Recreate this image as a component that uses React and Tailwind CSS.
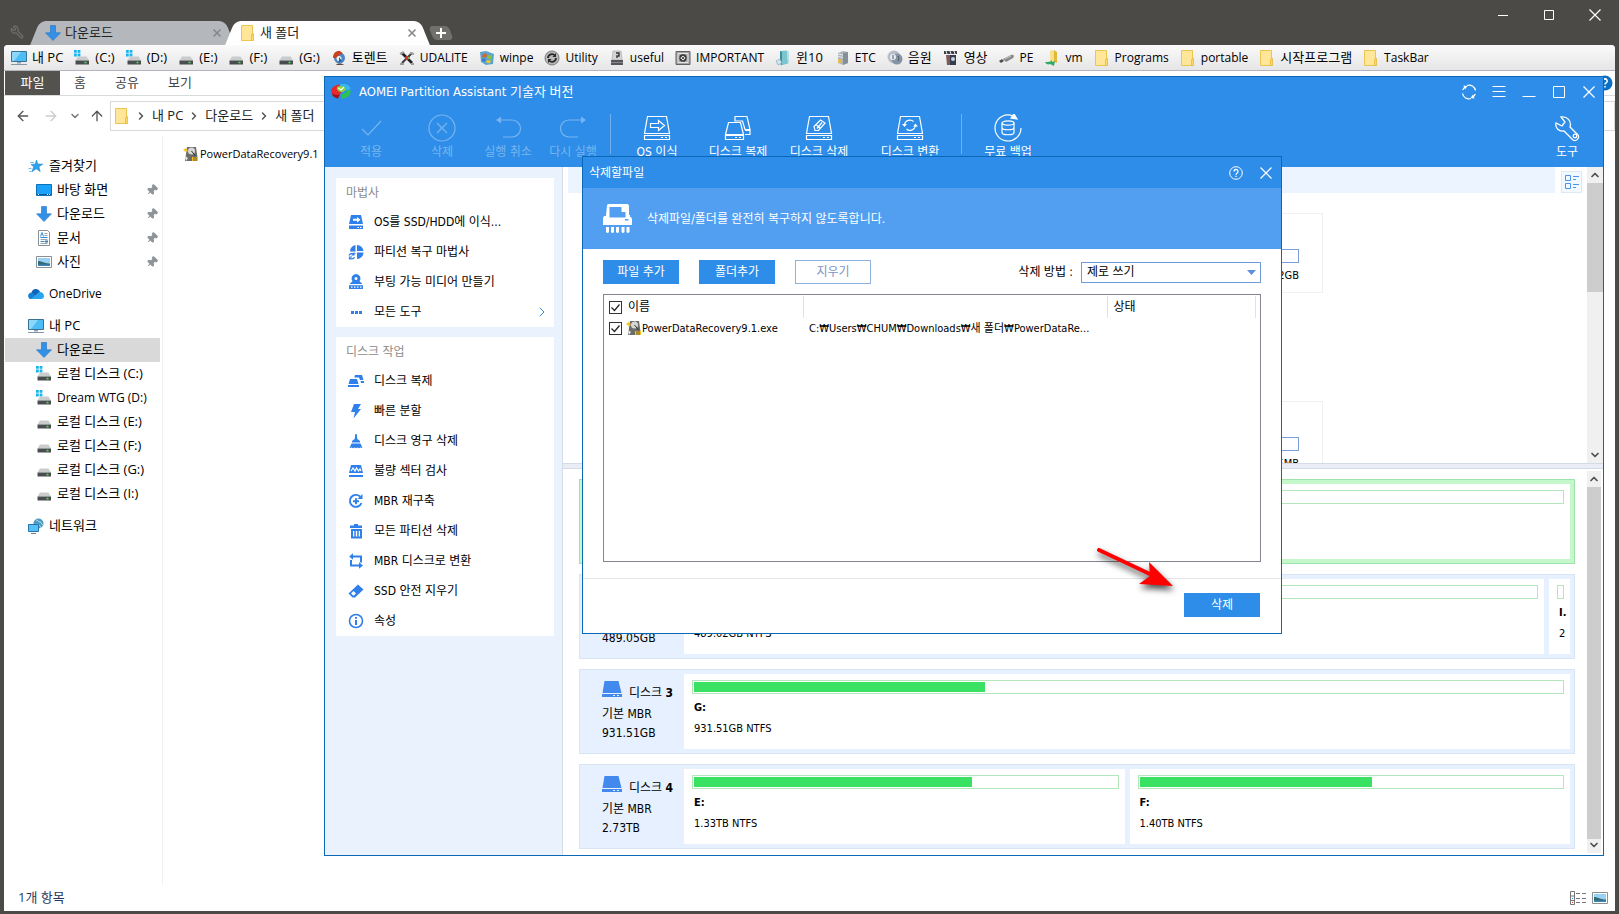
import React, { useState } from 'react';
import { Pin, Wrench, ArrowLeft, ArrowRight, ArrowUp, ChevronDown, ChevronRight, ChevronUp } from 'lucide-react';

/* ---------- Explorer icons ---------- */

const DownIcon = () => (
  <svg className="size-4 shrink-0" viewBox="0 0 16 16">
    <path d="M5.500.5h5v7.300h5L8 15.500.5 7.800h5z" fill="#3390e6" stroke="#1f74c4" strokeWidth=".6" />
  </svg>
);

const FolderIcon = () => (
  <svg className="size-4 shrink-0" viewBox="0 0 16 16">
    <path d="M1.500.5h11v15h-11z" fill="#ffe698" stroke="#eac54f" />
    <path d="M11.500 9.500l2-1v7h-2z" fill="#ffd968" stroke="#e3b93d" strokeWidth=".8" />
  </svg>
);

const PcIcon = () => (
  <svg className="size-4 shrink-0" viewBox="0 0 16 16">
    <path d="M.5 1.500h15v10H.5z" fill="#4fbdf5" stroke="#3a7296" />
    <path d="M1 2h9L3 11H1z" fill="#8bd8fb" />
    <path d="M6 12h4v1.500H6z" fill="#8fa3b3" />
    <path d="M0 14.500h16" stroke="#8496a6" />
  </svg>
);

const DriveIcon = ({ system }) => (
  <svg className="size-4 shrink-0" viewBox="0 0 16 16">
    {system && <path d="M0 0h2.800v2.800H0zM3.600 0h2.800v2.800H3.600zM0 3.600h2.800v2.800H0zM3.600 3.600h2.800v2.800H3.600z" fill="#18b4f1" />}
    <path d="M4 6.500h8.500l2.500 4H1.500z" fill="#c9cbcd" />
    <path d="M1.500 10.500H15v4H1.500z" fill="#4a4d50" />
    <path d="M10.500 11.800h2v1.500h-2z" fill="#4be34f" />
  </svg>
);

const StarIcon = () => (
  <svg className="size-4 shrink-0" viewBox="0 0 16 16">
    <path d="M8.500 2l1.200 4 5 .2-3.800 2.500 1.300 4.800-4-2.700-4.300 3 1.800-5-2.700-2.400 4.200-.2z" fill="#2ba3ec" stroke="#1783c9" strokeWidth=".6" />
    <path d="M2 4.500h4M.5 10.500h3M1.500 13.500h2" stroke="#69c2f5" />
  </svg>
);

const DesktopIcon = () => (
  <svg className="size-4 shrink-0" viewBox="0 0 16 16">
    <path d="M.5 2.500h15v11H.5z" fill="#1ba1f9" stroke="#0c73bb" />
    <path d="M1 12.500h14" stroke="#0a5b98" />
    <path d="M2 12.500h1M11 12.500h1M13 12.500h1" stroke="#fff" />
  </svg>
);

const DocIcon = () => (
  <svg className="size-4 shrink-0" viewBox="0 0 16 16">
    <path d="M2.500.5h9l2 2v13h-11z" fill="#fff" stroke="#8a8f94" />
    <path d="M8.500 3.500h3M8.500 5.500h3M4.500 9.500h7M4.500 13.500h7" stroke="#9aa4ad" />
    <path d="M4.500 6.500l1.500-4 1.500 4M4.500 7.500h7M4.500 11.500h4" stroke="#2c8ad6" fill="none" />
    <path d="M9 10.500h3v2H9z" fill="#53799a" />
  </svg>
);

const PictureIcon = () => (
  <svg className="size-4 shrink-0" viewBox="0 0 16 16">
    <path d="M.5 2.500h15v11H.5z" fill="#fff" stroke="#8a8f94" />
    <path d="M2 4h12v8H2z" fill="#9bd0f5" />
    <path d="M2 7c4 0 6 2.500 12 2.500V12H2z" fill="#2f6d73" />
    <path d="M2 10.500h12V12H2z" fill="#3f84b8" />
  </svg>
);

const CloudIcon = () => (
  <svg className="size-4 shrink-0" viewBox="0 0 16 16">
    <path d="M3.500 7a4.500 4.500 0 0 1 8.500-1.500L8 11z" fill="#0f64ba" />
    <path d="M.2 10.500A3.500 3.500 0 0 1 4 6.500l7 6.500H3A2.800 2.800 0 0 1 .2 10.500z" fill="#1680d5" />
    <path d="M3 13l7.500-6.500C13 5 16 7.500 16 10.200A2.800 2.800 0 0 1 13.500 13z" fill="#29a5ef" />
  </svg>
);

const NetworkIcon = () => (
  <svg className="size-4 shrink-0" viewBox="0 0 16 16">
    <circle cx="10.500" cy="5.500" r="5" fill="#4b9cc0" />
    <path d="M8 2c2 0 2 2 4 2s1 3 3 3M9 6c2 1 3 1 4 4" stroke="#b9dcea" fill="none" />
    <path d="M.5 6.500h10v7H.5z" fill="#56c0f7" stroke="#2775a8" />
    <path d="M3 15.500h5" stroke="#6d8598" />
  </svg>
);

const SetupIcon = () => (
  <svg className="size-4 shrink-0" viewBox="0 0 16 16">
    <path d="M4 1h9l2 14H2z" fill="#6c6d6b" />
    <circle cx="8.500" cy="5" r="3.500" fill="#d7d8d3" />
    <path d="M8.500 5l4 5" stroke="#333" />
    <path d="M0 4l3-2 2 3-2 1zM9 11h6v4H9z" fill="#f4c320" />
    <path d="M11 11v4M13 11v4" stroke="#3a3a34" strokeWidth=".8" />
    <path d="M2 10l3 2-2 3z" fill="#e7e7e0" />
  </svg>
);

/* ---------- Bookmark icons ---------- */

const TorrentIcon = () => (
  <svg className="size-4 shrink-0" viewBox="0 0 16 16">
    <circle cx="8.500" cy="8" r="5.500" fill="#4c86c6" />
    <path d="M2 8C2 3 5 .5 9 1l3 2.500L8 5 6 8z" fill="#c9401f" />
    <circle cx="8" cy="8.500" r="2.500" fill="#e8f2fb" />
    <path d="M8 7l3 4-3 1z" fill="#2b5c99" />
    <path d="M5 15c1-2 6-2 8 0z" fill="#5e4a3f" />
  </svg>
);

const CrossToolsIcon = () => (
  <svg className="size-4 shrink-0" viewBox="0 0 16 16" fill="none">
    <path d="M3 3l10 10" stroke="#202020" strokeWidth="2.600" />
    <path d="M13 3L3 13" stroke="#3c3c3c" strokeWidth="2" />
    <path d="M1 4l4-2M1 14h4M12 14h3M11 3l4 1" stroke="#9b9b9b" strokeWidth="2" />
    <circle cx="8" cy="8" r="2" fill="#d8343b" />
    <path d="M9 7h2v2H9z" fill="#5fc247" />
  </svg>
);

const WinpeIcon = () => (
  <svg className="size-4 shrink-0" viewBox="0 0 16 16">
    <path d="M1 2l6-1 8 3-1 10-7 1-5-3z" fill="#5aa6cd" />
    <path d="M4 4c2-1 3 0 4 .5L7 8c-1-1-2-1-4-.5z" fill="#e65a2b" />
    <path d="M9 5c2 1 3 0 4 0l-1 4c-2 .5-3 0-4-1z" fill="#86c440" />
    <path d="M3 9c2-1 3 0 4 .5L6 12c-1-1-2-1-3-.5z" fill="#3c7bd0" />
    <path d="M8 10c2 1 3 0 4 0l-1 3c-1 .5-3 0-4-1z" fill="#f5c52e" />
  </svg>
);

const UtilityIcon = () => (
  <svg className="size-4 shrink-0" viewBox="0 0 16 16" fill="none">
    <circle cx="8" cy="8" r="7" fill="#b9b9b9" stroke="#7c7c7c" />
    <path d="M4 8a4 4 0 0 1 7-2.500M12 8a4 4 0 0 1-7 2.500" stroke="#2a2a2a" strokeWidth="1.800" />
    <path d="M12 3v4H8.500zM4 13V9h3.500z" fill="#2a2a2a" />
  </svg>
);

const UsefulIcon = () => (
  <svg className="size-4 shrink-0" viewBox="0 0 16 16">
    <path d="M4 1h8l1 9H3z" fill="#d5d5d5" stroke="#a4a4a4" strokeWidth=".6" />
    <path d="M7 3h3v3H8v2" stroke="#333" fill="none" strokeWidth="1.400" />
    <path d="M2 10h12v5H2z" fill="#55565a" />
    <path d="M2 12.500h12" stroke="#9a9ba0" strokeWidth=".7" />
  </svg>
);

const SafeIcon = () => (
  <svg className="size-4 shrink-0" viewBox="0 0 16 16" fill="none">
    <path d="M1 1.500h14v13H1z" fill="#a5a5a5" stroke="#626262" />
    <path d="M3 3.500h10v9H3z" stroke="#e4e4e4" />
    <circle cx="8" cy="8" r="3" fill="#dcdcdc" stroke="#333" strokeWidth="1.300" />
    <path d="M6 6l4 4M10 6l-4 4" stroke="#555" />
  </svg>
);

const BoxIcon = () => (
  <svg className="size-4 shrink-0" viewBox="0 0 16 16">
    <path d="M5 1l7-.5 1 13-7 2z" fill="#7cc5cf" />
    <path d="M5 1l2 1v13l-2-1z" fill="#3d8e9c" />
    <path d="M1 11l4-2 2 4-4 2z" fill="#cfe6ee" stroke="#7a9bb0" strokeWidth=".6" />
    <path d="M12 .5l2 1v12l-1 0z" fill="#b8dfe5" />
  </svg>
);

const ServerIcon = () => (
  <svg className="size-4 shrink-0" viewBox="0 0 16 16">
    <path d="M4 3l5-2 5 1v11l-5 2-5-2z" fill="#aeb6bd" />
    <path d="M9 3l5-1v11l-5 2z" fill="#868f97" />
    <path d="M4 4l5 1M4 6.500l5 1" stroke="#e6eaed" />
    <path d="M4 9h3v4H4z" fill="#e0bd57" />
  </svg>
);

const SpeakerIcon = () => (
  <svg className="size-4 shrink-0" viewBox="0 0 16 16">
    <circle cx="7" cy="7" r="6.500" fill="#b6bfc9" />
    <circle cx="10" cy="9" r="5.500" fill="#8593a3" />
    <circle cx="6" cy="7" r="3" fill="#e7ecf1" />
    <path d="M6 5v4M11 6c1 1 1 4 0 5" stroke="#4c5967" fill="none" />
  </svg>
);

const VideoIcon = () => (
  <svg className="size-4 shrink-0" viewBox="0 0 16 16">
    <path d="M1 1h13v3H1z" fill="#3c4048" />
    <path d="M3 1l1 3M7 1l1 3M11 1l1 3" stroke="#e8e8e8" />
    <path d="M3 5h4v10H4z" fill="#7b5a58" />
    <path d="M7 5h6v10H7z" fill="#343c52" />
    <circle cx="10" cy="9" r="2" fill="#c8d1e2" />
  </svg>
);

const UsbIcon = () => (
  <svg className="size-4 shrink-0" viewBox="0 0 16 16">
    <path d="M4 9l8-4c2-1 4 1 2 3l-7 4z" fill="#868686" />
    <path d="M0 11l3-2 2 2-3 2z" fill="#4e4e4e" />
    <path d="M6 9l6-3" stroke="#c9c9c9" />
  </svg>
);

const VmIcon = () => (
  <svg className="size-4 shrink-0" viewBox="0 0 16 16">
    <path d="M6 1l4-1v12H6z" fill="#f7e08c" />
    <path d="M10 0l3 2v11l-3-1z" fill="#e0b83c" />
    <path d="M1 12c3 0 6 0 7-2v2l3-1-1 5-4-2c-2 1-4 0-5-2z" fill="#33a866" />
  </svg>
);

/* ---------- Window buttons ---------- */

const MinIcon = () => (
  <svg className="size-4 stroke-current" viewBox="0 0 16 16"><path d="M3 8.500h10" /></svg>
);
const MaxIcon = () => (
  <svg className="size-4 fill-none stroke-current" viewBox="0 0 16 16"><path d="M3.500 3.500h9v9h-9z" /></svg>
);
const CloseIcon = () => (
  <svg className="size-4 stroke-current" viewBox="0 0 16 16" strokeWidth="1.200"><path d="M2.500 2.500l11 11M13.500 2.500l-11 11" /></svg>
);

/* ---------- Partition Assistant icons ---------- */

const AomeiLogo = () => (
  <svg className="size-5 shrink-0" viewBox="0 0 20 20">
    <path d="M.5 10C-.5 6 3 3.500 8 2.500l3 5-2 5-4 3c-3-1-4-3-4.500-5.500z" fill="#e8282b" />
    <path d="M1 11c2 2 5 2.500 8 1.500L7 16.500c-3-.5-6-2.500-6-5.500z" fill="#a81116" />
    <path d="M9 2.500c5-1.500 10 .5 10.500 4.500l-6 2-4-2z" fill="#3ab6ef" />
    <path d="M19.500 8c1 5-3 8-9 9l0-5c3 0 5-2 6-4z" fill="#2fc052" />
    <path d="M6 5c3-2 7-1 8 1s-1 4-3 4-6-1-5-5z" fill="#84d640" />
    <path d="M7.500 6l2.500 2 3-3" stroke="#fff" strokeWidth="1.200" fill="none" />
  </svg>
);

const toolSvg = 'h-7 w-7 fill-none stroke-current';

const DiskBase = ({ children }) => (
  <svg className={toolSvg} viewBox="0 0 28 28" strokeWidth="1.200">
    <path d="M4.500 2.500h19l3 17h-25zM1.500 21.500h25v4h-25z" />
    <path d="M18 23.500h2M22 23.500h2" />
    {children}
  </svg>
);

const CheckTool = () => (
  <svg className={toolSvg} viewBox="0 0 28 28" strokeWidth="1.200"><path d="M5 15l6 6L24 7" /></svg>
);
const CancelTool = () => (
  <svg className={toolSvg} viewBox="0 0 28 28" strokeWidth="1.200">
    <circle cx="14" cy="14" r="13" />
    <path d="M9 9l10 10M19 9L9 19" />
  </svg>
);
const UndoTool = () => (
  <svg className={toolSvg} viewBox="0 0 28 28" strokeWidth="1.200">
    <path d="M6 6h12a8.500 8.500 0 0 1 0 17H9" />
    <path d="M2 6l5-3.500v7z" fill="currentColor" stroke="none" />
  </svg>
);
const RedoTool = () => (
  <svg className={toolSvg} viewBox="0 0 28 28" strokeWidth="1.200">
    <path d="M22 6H10a8.500 8.500 0 0 0 0 17h9" />
    <path d="M27 6l-5-3.500v7z" fill="currentColor" stroke="none" />
  </svg>
);
const MigrateTool = () => (
  <DiskBase><path d="M7.500 9.500h8v-3l6 5-6 5v-3h-8z" /></DiskBase>
);
const CloneTool = () => (
  <svg className={toolSvg} viewBox="0 0 28 28" strokeWidth="1.200">
    <path d="M4.500 8.500h12l3 12H1.500zM1.500 21.500h18v4h-18z" />
    <path d="M11 7l0-4.500h12l3 13h-5L18.500 7z" />
    <path d="M21 16.500h5v4h-5M11 23.500h2M15 23.500h2" />
  </svg>
);
const WipeTool = () => (
  <DiskBase>
    <path d="M9 12.500l6.500-6.500 4.500 3-6.500 7.500H10z" />
    <path d="M11.500 11l4 3.500M12 14.500l5-6" />
  </DiskBase>
);
const ConvertTool = () => (
  <DiskBase>
    <path d="M8.500 10.500a5.500 5.500 0 0 1 9-3M19.500 12a5.500 5.500 0 0 1-9 3" />
    <path d="M6 10l2.500 3 2.500-3zM17 12.500l2.500-3 2.500 3z" fill="currentColor" stroke="none" />
  </DiskBase>
);
const BackupTool = () => (
  <svg className={toolSvg} viewBox="0 0 28 28" strokeWidth="1.200">
    <path d="M19 2a13 13 0 1 0 8 12" />
    <path d="M20 0l3 5-6-1z" fill="currentColor" />
    <ellipse cx="14" cy="9" rx="6" ry="2.200" />
    <path d="M8 9v9.500c0 3 12 3 12 0V9M8 13.500c0 3 12 3 12 0" />
  </svg>
);
const WrenchTool = () => (
  <svg className={toolSvg} viewBox="0 0 28 28" strokeWidth="1.300">
    <path d="M3 9c-1 5 3 9 8 8l9 9c3 2 7-2 5-5l-8-8c2-6-3-11-9-10l4 5-3 4z" />
    <circle cx="22" cy="22" r="1.800" />
  </svg>
);
const RefreshGlyph = () => (
  <svg className="size-4 fill-none stroke-current" viewBox="0 0 16 16" strokeWidth="1.300">
    <path d="M1.500 9.500A6.500 6.500 0 0 0 10 14.500M1.800 6A6.500 6.500 0 0 1 4 3M14.500 6.500A6.500 6.500 0 0 0 6 1.500M14.200 10a6.500 6.500 0 0 1-2.200 3" />
    <path d="M2.500 1.500l4 .5-2.500 3.500zM13.500 14.500l-4-.5 2.500-3.500z" fill="currentColor" stroke="none" />
  </svg>
);

const side = 'size-4 shrink-0 fill-[#2f80ea]';

const SideMigrate = () => (
  <svg className={side} viewBox="0 0 16 16">
    <path fillRule="evenodd" d="M3 1h10l2 9H1zM5 4.700v2h4v1.800l3.500-2.800L9 2.900v1.800z" />
    <path fillRule="evenodd" d="M1 11.500h14V15H1zM9.500 13v1H11v-1zM12 13v1h1.500v-1z" />
  </svg>
);
const SidePie = () => (
  <svg className={side} viewBox="0 0 16 16">
    <path d="M7.500 1v6.500H2A6.500 6.500 0 0 1 7.500 1zM9 1a6.500 6.500 0 0 1 6.500 6H9zM9 8.500h6.500A6.500 6.500 0 0 1 9 15zM7.500 9v1H5z" />
    <path d="M1 11.500a3 3 0 0 1 5-1M6.500 13a3 3 0 0 1-5 1M6 8.500V11H3.500M1.500 15.500V13H4" fill="none" stroke="#2f80ea" strokeWidth="1.200" />
  </svg>
);
const SideMedia = () => (
  <svg className={side} viewBox="0 0 16 16">
    <path fillRule="evenodd" d="M8 0a4.500 4.500 0 0 1 3.500 7.300L14.500 10h-13l3-2.700A4.500 4.500 0 0 1 8 0zM8 3a1.500 1.500 0 1 0 0 3 1.500 1.500 0 0 0 0-3z" />
    <path fillRule="evenodd" d="M1 11.200h14V15H1zM3 12.500v1.300h1.500v-1.300zM6 12.500v1.300h1.500v-1.300zM9 12.500v1.300h1.500v-1.300zM12 12.500v1.300h1.500v-1.300z" />
  </svg>
);
const SideDots = () => (
  <svg className={side} viewBox="0 0 16 16"><path d="M3 7h3v3H3zM7 7h3v3H7zM11 7h3v3h-3z" /></svg>
);
const SideClone = () => (
  <svg className={side} viewBox="0 0 16 16">
    <path d="M7 2h7l1.500 5H12l-1-2.500H6.300zM12.500 8H16v2h-3zM2 6h7l1.500 5H.5zM0 12h11v2H0z" />
  </svg>
);
const SideBolt = () => (
  <svg className={side} viewBox="0 0 16 16"><path d="M6 1h7L10 6h3L5.500 15.500 7 9H3z" /></svg>
);
const SideBrush = () => (
  <svg className={side} viewBox="0 0 16 16">
    <path d="M7.300 1h1.400l.6 5L12 8v1.500H4V8l2.700-2zM3.500 10.500h9l2 4.500-2-.5L11 15.300 9.500 14.500 8 15.300l-1.500-.8L5 15.300l-1.500-.8-2 .5z" />
  </svg>
);
const SideScan = () => (
  <svg className={side} viewBox="0 0 16 16">
    <path d="M3 2h10l2 8H1zM1 12h14v2H1z" />
    <path d="M3 8l2-3 2 3 1.500-3 2 3 1.500-2 1 2" fill="none" stroke="#fff" strokeWidth="1.200" />
  </svg>
);
const SideRebuild = () => (
  <svg className="size-4 shrink-0 fill-none stroke-[#2f80ea]" viewBox="0 0 16 16" strokeWidth="1.900">
    <path d="M13.500 10A6 6 0 1 1 12 3.500M8 5.300v6M5 8.300h6" />
    <path d="M14.500 1v5H9.500z" fill="#2f80ea" stroke="none" />
  </svg>
);
const SideTrash = () => (
  <svg className={side} viewBox="0 0 16 16">
    <path fillRule="evenodd" d="M2 2.500h4V1h4v1.500h4V5H2zM3 6h11v9.500H3zM5 8v5.500h1.300V8zM7.800 8v5.500h1.400V8zM10.700 8v5.500H12V8z" />
  </svg>
);
const SideConvert = () => (
  <svg className={side} viewBox="0 0 16 16">
    <path d="M4 3.500h9v6M3 7v5.500h9" fill="none" stroke="#2f80ea" strokeWidth="2" />
    <path d="M5 .2v6.600L1.200 3.500zM11 9.200l4 3.300-4 3.300z" />
  </svg>
);
const SideEraser = () => (
  <svg className={side} viewBox="0 0 16 16">
    <path fillRule="evenodd" d="M10 1.500l5.500 5L7 14.500H4.500L.5 10.500zM3 10.500l2.500 2.300L8 10.500 5.500 8z" />
  </svg>
);
const SideInfo = () => (
  <svg className="size-4 shrink-0 fill-none stroke-[#2f80ea]" viewBox="0 0 16 16" strokeWidth="1.600">
    <circle cx="8" cy="8" r="6.500" />
    <path d="M8 4v1.800M8 7v5" strokeWidth="2" />
  </svg>
);

const ShredderIcon = () => (
  <svg className="h-[30px] w-[30px] shrink-0 fill-white" viewBox="0 0 30 30">
    <path fillRule="evenodd" d="M4 1.500Q4 0 5.500 0H24q2 0 2 2v9h1v2h1l1 2v6H0v-7l1-2h2l0-1zM6.500 3v10.500h16V8h-4V3zM22 15v1.500h3.500V15z" />
    <path d="M3 23h3v5q-1.500 2-3 0zM8 23h3v5q-1.500 2-3 0zM13 23h3v5q-1.500 2-3 0zM18.500 23h3v5q-1.500 2-3 0zM23.500 23h3v5q-1.500 2-3 0z" />
  </svg>
);

const DiskIcon = () => (
  <svg className="h-4 w-5 shrink-0 fill-[#4289ee]" viewBox="0 0 20 16">
    <path d="M2.500 0h14L19.500 12H.5z" />
    <path fillRule="evenodd" d="M0 13h20v3H0zM11 14v1h2v-1zM15 14v1h2v-1z" />
  </svg>
);

/* ---------- Data ---------- */

const bookmarks = [
  ['내 PC', <PcIcon />],
  ['(C:)', <DriveIcon system />],
  ['(D:)', <DriveIcon system />],
  ['(E:)', <DriveIcon />],
  ['(F:)', <DriveIcon />],
  ['(G:)', <DriveIcon />],
  ['토렌트', <TorrentIcon />],
  ['UDALITE', <CrossToolsIcon />],
  ['winpe', <WinpeIcon />],
  ['Utility', <UtilityIcon />],
  ['useful', <UsefulIcon />],
  ['IMPORTANT', <SafeIcon />],
  ['윈10', <BoxIcon />],
  ['ETC', <ServerIcon />],
  ['음원', <SpeakerIcon />],
  ['영상', <VideoIcon />],
  ['PE', <UsbIcon />],
  ['vm', <VmIcon />],
  ['Programs', <FolderIcon />],
  ['portable', <FolderIcon />],
  ['시작프로그램', <FolderIcon />],
  ['TaskBar', <FolderIcon />],
];

const navGroups = [
  {
    label: '즐겨찾기',
    icon: <StarIcon />,
    items: [
      { label: '바탕 화면', icon: <DesktopIcon />, pinned: true },
      { label: '다운로드', icon: <DownIcon />, pinned: true },
      { label: '문서', icon: <DocIcon />, pinned: true },
      { label: '사진', icon: <PictureIcon />, pinned: true },
    ],
  },
  { label: 'OneDrive', icon: <CloudIcon />, items: [] },
  {
    label: '내 PC',
    icon: <PcIcon />,
    items: [
      { label: '다운로드', icon: <DownIcon />, active: true },
      { label: '로컬 디스크 (C:)', icon: <DriveIcon system /> },
      { label: 'Dream WTG (D:)', icon: <DriveIcon system /> },
      { label: '로컬 디스크 (E:)', icon: <DriveIcon /> },
      { label: '로컬 디스크 (F:)', icon: <DriveIcon /> },
      { label: '로컬 디스크 (G:)', icon: <DriveIcon /> },
      { label: '로컬 디스크 (I:)', icon: <DriveIcon /> },
    ],
  },
  { label: '네트워크', icon: <NetworkIcon />, items: [] },
];

const wizardItems = [
  ['OS를 SSD/HDD에 이식...', <SideMigrate />],
  ['파티션 복구 마법사', <SidePie />],
  ['부팅 가능 미디어 만들기', <SideMedia />],
  ['모든 도구', <SideDots />, true],
];

const diskItems = [
  ['디스크 복제', <SideClone />],
  ['빠른 분할', <SideBolt />],
  ['디스크 영구 삭제', <SideBrush />],
  ['불량 섹터 검사', <SideScan />],
  ['MBR 재구축', <SideRebuild />],
  ['모든 파티션 삭제', <SideTrash />],
  ['MBR 디스크로 변환', <SideConvert />],
  ['SSD 안전 지우기', <SideEraser />],
  ['속성', <SideInfo />],
];

const disks = [
  { selected: true, partitions: [{ used: 20 }] },
  {
    size: '489.05GB',
    partitions: [
      { used: 30, size: '489.02GB NTFS' },
      { name: 'I.', size: '2', small: true },
    ],
  },
  { number: 3, type: '기본 MBR', size: '931.51GB', partitions: [{ name: 'G:', size: '931.51GB NTFS', used: 33.5 }] },
  {
    number: 4,
    type: '기본 MBR',
    size: '2.73TB',
    partitions: [
      { name: 'E:', size: '1.33TB NTFS', used: 65.7 },
      { name: 'F:', size: '1.40TB NTFS', used: 55 },
    ],
  },
];

// Latin-only labels are set one step smaller than Hangul ones and drive letters
const labelSize = (text) => (/[가-힣]|^\(/.test(text) ? 'text-[13px]' : 'text-xs');

/* ---------- Explorer ---------- */

function Tab({ label, icon, active }) {
  const fill = active ? 'bg-white' : 'bg-[#b4b8bd]';
  return (
    <div className={`relative flex h-6 w-[195px] items-center ${active ? 'z-10' : ''}`}>
      <span className={`absolute inset-y-0 left-0 w-2/3 origin-center -skew-x-[22deg] rounded-tl-md ${fill}`} />
      <span className={`absolute inset-y-0 right-0 w-2/3 origin-center skew-x-[22deg] rounded-tr-md ${fill}`} />
      <button className="relative flex flex-1 items-center gap-1 pl-2.5 text-[13px] text-[#222]">
        {icon}
        {label}
      </button>
      <button aria-label="탭 닫기" className="relative mr-2 text-[#85888c]">
        <svg className="size-2.5 stroke-current" viewBox="0 0 10 10" strokeWidth="1.600"><path d="M1.500 1.500l7 7M8.500 1.500l-7 7" /></svg>
      </button>
    </div>
  );
}

function TitleBar() {
  return (
    <header className="flex h-[45px] items-end text-white">
      <Wrench className="mb-1.5 ml-2.5 size-3.5 -scale-x-100 text-[#72706c]" />
      <div className="ml-[11px] flex">
        <Tab label="다운로드" icon={<DownIcon />} />
        <Tab label="새 폴더" icon={<FolderIcon />} active />
      </div>
      <button aria-label="새 탭" className="relative mb-[5px] ml-1.5 flex h-3.5 w-5 items-center justify-center">
        <span className="absolute inset-0 skew-x-[20deg] rounded-sm bg-[#71706d]" />
        <svg className="relative size-2.5 stroke-white" viewBox="0 0 10 10" strokeWidth="2"><path d="M5 0v10M0 5h10" /></svg>
      </button>
      <div className="mb-auto ml-auto flex gap-[30px] pt-[7px] pr-4">
        <button aria-label="최소화"><MinIcon /></button>
        <button aria-label="최대화"><MaxIcon /></button>
        <button aria-label="닫기"><CloseIcon /></button>
      </div>
    </header>
  );
}

function NavRow({ item, nested }) {
  return (
    <a
      href="#"
      className={`flex h-6 w-[155px] items-center gap-[5px] ${nested ? 'pl-[31px]' : 'pl-[23px]'} ${item.active ? 'bg-[#d9d9d9]' : ''} ${labelSize(item.label)}`}
    >
      {item.icon}
      <span className="whitespace-nowrap">{item.label}</span>
      {item.pinned && <Pin className="mr-0.5 ml-auto size-3 rotate-45 fill-[#8d9499] text-[#8d9499]" />}
    </a>
  );
}

function Explorer() {
  return (
    <>
      <nav className="flex h-[26px] shrink-0 items-center gap-[11px] border-b border-[#b5b5c0] bg-gradient-to-b from-[#fafafa] to-[#e6e6e6] pl-[7px]">
        {bookmarks.map(([label, icon]) => (
          <a key={label} href="#" className={`flex shrink-0 items-center gap-[5px] ${labelSize(label)}`}>
            {icon}
            {label}
          </a>
        ))}
      </nav>
      <div className="flex h-[25px] shrink-0 items-stretch border-b border-[#dadbdc] pl-px text-[13px] text-[#444]">
        <button className="w-[55px] bg-[#53524f] text-white">파일</button>
        <button className="w-10">홈</button>
        <button className="w-[54px]">공유</button>
        <button className="w-[52px]">보기</button>
        <svg className="mt-1 mr-0.5 ml-auto size-4" viewBox="0 0 16 16">
          <circle cx="8" cy="8" r="7.500" fill="#0b6fc4" />
          <path d="M5.800 6a2.200 2.200 0 1 1 3.200 2c-.8.4-1 .8-1 1.600M8 11v1.600" stroke="#fff" strokeWidth="1.600" fill="none" />
        </svg>
      </div>
      <div className="flex h-10 shrink-0 items-center text-[13px]">
        <ArrowLeft className="ml-[11px] size-4 text-[#555]" />
        <ArrowRight className="ml-3 size-4 text-[#ccc]" />
        <ChevronDown className="ml-2.5 size-3 text-[#777]" strokeWidth={3} />
        <ArrowUp className="ml-2 size-4 text-[#555]" />
        <div className="ml-[5px] flex h-[30px] flex-1 items-center gap-[5px] border border-[#d9d9d9] pl-[3px]">
          <FolderIcon />
          {['내 PC', '다운로드', '새 폴더'].map((part) => (
            <React.Fragment key={part}>
              <ChevronRight className="size-3 text-[#555]" strokeWidth={3} />
              <a href="#" className="text-[#222]">{part}</a>
            </React.Fragment>
          ))}
        </div>
      </div>
      <div className="flex min-h-0 flex-1">
        <aside className="flex w-[159px] flex-col gap-2 border-r border-[#f2f2f2] pt-[18px] pl-px">
          {navGroups.map((group) => (
            <div key={group.label}>
              <NavRow item={group} />
              {group.items.map((item) => (
                <NavRow key={item.label} item={item} nested />
              ))}
            </div>
          ))}
        </aside>
        <main className="flex-1 pt-2.5 pl-5">
          <a href="#" className="flex items-center gap-px text-[11px] leading-4">
            <SetupIcon />
            PowerDataRecovery9.1
          </a>
        </main>
      </div>
      <footer className="flex h-[26px] shrink-0 items-center gap-1.5 pr-[7px] pl-3.5 text-[13px] text-[#233a5e]">
        1개 항목
        <svg className="ml-auto size-4" viewBox="0 0 16 16" fill="none" stroke="#777">
          <path d="M.5 1.500h4v13h-4zM.5 6h4M.5 10.500h4M6 3.500h4M12 3.500h4M6 8.500h4M12 8.500h4M6 12.500h4M12 12.500h4" />
          <path d="M2 8.500h1" stroke="#3390e6" />
          <path d="M2 12.500h1" stroke="#d33" />
        </svg>
        <PictureIcon />
      </footer>
    </>
  );
}

/* ---------- Partition Assistant ---------- */

function ToolButton({ icon, label, width, disabled }) {
  return (
    <button disabled={disabled} className={`flex flex-col items-center gap-0.5 whitespace-nowrap disabled:text-[#78b5f0] ${width}`}>
      {icon}
      <span className="leading-4">{label}</span>
    </button>
  );
}

function SideCard({ title, items }) {
  return (
    <section className="bg-white">
      <h2 className="flex h-[29px] items-center pl-2.5 text-[#8c8c8c]">{title}</h2>
      {items.map(([label, icon, more]) => (
        <button key={label} className="flex h-[30px] w-full items-center gap-2.5 pr-1 pl-3">
          {icon}
          {label}
          {more && <ChevronRight className="ml-auto size-4 text-[#2e8de8]" strokeWidth={1.500} />}
        </button>
      ))}
    </section>
  );
}

function ScrollBar({ width, thumb }) {
  return (
    <div className={`flex shrink-0 flex-col items-center bg-[#f0f0f0] ${width}`}>
      <ChevronUp className="my-0.5 size-3 shrink-0 text-[#505050]" strokeWidth={3.500} />
      <div className={`w-full bg-[#cdcdcd] ${thumb}`} />
      <ChevronDown className="mt-auto mb-0.5 size-3 shrink-0 text-[#505050]" strokeWidth={3.500} />
    </div>
  );
}

function VolumeCard({ size }) {
  return (
    <div className="flex h-20 w-[173px] shrink-0 flex-col items-end border border-[#f0f0f0] pt-[35px] pr-[23px]">
      <div className="h-3.5 w-24 shrink-0 border border-[#7b9fdb]" />
      <span className="mt-[5px] text-[11px] leading-4">{size}</span>
    </div>
  );
}

function DiskRow({ disk }) {
  return (
    <div className={`flex h-[85px] shrink-0 border p-1 ${disk.selected ? 'border-[#9fe3ab] bg-[#c4f7ca]' : 'border-[#d8e5f5] bg-[#e6f0fe]'}`}>
      <div className="flex w-[100px] flex-col pt-[7px] pl-[18px]">
        <div className="flex h-5 items-start gap-[7px]">
          <DiskIcon />
          {disk.number && (
            <span className="leading-6 whitespace-nowrap">
              디스크 <b>{disk.number}</b>
            </span>
          )}
        </div>
        <span className="mt-1 h-[19px] leading-[19px]">{disk.type}</span>
        <span className="h-[19px] leading-[19px]">{disk.size}</span>
      </div>
      <div className="flex flex-1 gap-[5px]">
        {disk.partitions.map((part, i) => (
          <div key={i} className={`overflow-hidden bg-white pt-1.5 pr-1.5 pl-2 text-[11px] ${part.small ? 'w-[21px]' : 'flex-1'}`}>
            <div className="h-3.5 border border-[#b3e6bd] p-px">
              <div className="h-full bg-[#3be163]" style={{ width: `${part.used || 0}%` }} />
            </div>
            <b className="mt-1.5 block h-4 pl-0.5 leading-4">{part.name}</b>
            <span className="mt-[5px] block h-4 pl-0.5 leading-4 whitespace-nowrap">{part.size}</span>
          </div>
        ))}
      </div>
    </div>
  );
}

function CheckBox({ label, children }) {
  const [checked, setChecked] = useState(true);
  return (
    <label className="flex items-center gap-1.5">
      <span className="relative size-[13px] shrink-0">
        <input
          type="checkbox"
          aria-label={label}
          checked={checked}
          onChange={(e) => setChecked(e.target.checked)}
          className="block size-[13px] appearance-none border border-[#333] bg-white"
        />
        {checked && (
          <svg className="pointer-events-none absolute inset-0 size-[13px] fill-none stroke-[#222]" viewBox="0 0 13 13" strokeWidth="1.200">
            <path d="M2.500 6.500l3 3 5-6" />
          </svg>
        )}
      </span>
      {children}
    </label>
  );
}

function ShredDialog() {
  return (
    <div role="dialog" aria-label="삭제할파일" className="absolute top-[79px] left-[257px] flex h-[478px] w-[700px] flex-col border border-[#0b68b5] bg-white">
      <div className="flex h-[31px] shrink-0 items-center bg-[#2e8de8] pr-[7px] pl-1.5 text-white">
        <h2 className="flex-1">삭제할파일</h2>
        <button aria-label="도움말" className="mr-[15px]">
          <svg className="size-3.5 fill-none stroke-current" viewBox="0 0 14 14" strokeWidth="1">
            <circle cx="7" cy="7" r="6.300" />
            <path d="M5 5.500a2 2 0 1 1 3 1.700c-.8.500-1 .8-1 1.500M7 9.700v1.300" strokeWidth="1.300" />
          </svg>
        </button>
        <button aria-label="닫기"><CloseIcon /></button>
      </div>
      <div className="flex h-[61px] shrink-0 items-center gap-3.5 bg-[#529ff2] pl-5 text-white">
        <ShredderIcon />
        삭제파일/폴더를 완전히 복구하지 않도록합니다.
      </div>
      <div className="flex min-h-0 flex-1 flex-col px-5 pt-[11px]">
        <div className="flex items-center gap-5">
          <button className="h-6 w-[76px] bg-[#2e8de8] text-white">파일 추가</button>
          <button className="h-6 w-[76px] bg-[#2e8de8] text-white">폴더추가</button>
          <button className="h-6 w-[76px] border border-[#8fb0e2] text-[#7a94c8]">지우기</button>
          <div className="ml-auto flex items-center gap-2">
            <label htmlFor="method">삭제 방법 :</label>
            <div className="relative">
              <select id="method" className="h-[21px] w-[180px] appearance-none border border-[#6f9bdc] bg-white pl-[5px]">
                <option>제로 쓰기</option>
              </select>
              <svg className="pointer-events-none absolute top-2 right-[5px] h-[5px] w-[9px] fill-[#5b90dd]" viewBox="0 0 9 5"><path d="M0 0h9L4.500 5z" /></svg>
            </div>
          </div>
        </div>
        <div className="mt-2.5 h-[268px] border border-[#828790] pt-px">
          <table className="w-full table-fixed text-left">
            <colgroup>
              <col className="w-[199px]" />
              <col className="w-[304px]" />
              <col className="w-[148px]" />
              <col />
            </colgroup>
            <thead>
              <tr className="h-[22px]">
                <th className="border-r border-[#e2e2e2] pl-[5px] font-normal"><CheckBox label="모두 선택">이름</CheckBox></th>
                <th className="border-r border-[#e2e2e2]"></th>
                <th className="border-r border-[#e2e2e2] pl-1.5 font-normal">상태</th>
                <th></th>
              </tr>
            </thead>
            <tbody className="text-[11px]">
              <tr className="h-5">
                <td className="pl-[5px]">
                  <CheckBox label="PowerDataRecovery9.1.exe 선택">
                    <span className="-ml-0.5 flex items-center whitespace-nowrap">
                      <SetupIcon />
                      <span className="pt-0.5">PowerDataRecovery9.1.exe</span>
                    </span>
                  </CheckBox>
                </td>
                <td className="pt-0.5 pl-1.5 whitespace-nowrap">C:₩Users₩CHUM₩Downloads₩새 폴더₩PowerDataRe...</td>
                <td></td>
                <td></td>
              </tr>
            </tbody>
          </table>
        </div>
      </div>
      <div className="flex h-[55px] shrink-0 items-start justify-end border-t border-[#e4e6ec] pt-3.5 pr-[21px]">
        <button className="h-6 w-[76px] bg-[#2e8de8] text-white">삭제</button>
      </div>
      <svg className="pointer-events-none absolute right-[99px] bottom-[35px] h-[60px] w-[90px] drop-shadow-[1px_4px_3px_rgba(0,0,0,0.7)]" viewBox="0 0 90 60">
        <path d="M7 12L60 37" stroke="#ff0000" strokeWidth="4" strokeLinecap="round" />
        <path d="M57 24L81 48 47 46 58 38z" fill="#ff0000" />
      </svg>
    </div>
  );
}

function PartitionAssistant() {
  return (
    <div className="absolute top-[76px] right-[15px] bottom-[58px] left-[324px] flex flex-col border border-[#0b68b5] bg-white font-['DejaVu_Sans_Condensed','Noto_Sans_CJK_KR',sans-serif] text-xs">
      <header className="flex h-[90px] shrink-0 flex-col bg-[#2e8de8] text-white">
        <div className="flex h-[30px] items-center pr-1.5 pl-1.5">
          <AomeiLogo />
          <h1 className="ml-2 flex-1 text-[13px]">AOMEI Partition Assistant 기술자 버전</h1>
          <div className="flex items-center gap-3.5">
            <button aria-label="새로 고침"><RefreshGlyph /></button>
            <button aria-label="메뉴">
              <svg className="size-4 stroke-current" viewBox="0 0 16 16"><path d="M1.500 2.500h13M1.500 7.500h13M1.500 12.500h13" /></svg>
            </button>
            <button aria-label="최소화">
              <svg className="size-4 stroke-current" viewBox="0 0 16 16"><path d="M1.500 12.500h13" /></svg>
            </button>
            <button aria-label="최대화">
              <svg className="size-4 fill-none stroke-current" viewBox="0 0 16 16"><path d="M2.500 2.500h11v11h-11z" /></svg>
            </button>
            <button aria-label="닫기"><CloseIcon /></button>
          </div>
        </div>
        <div className="flex items-start pt-[7px] pr-4 pl-[13px]">
          <ToolButton icon={<CheckTool />} label="적용" width="w-[66px]" disabled />
          <ToolButton icon={<CancelTool />} label="삭제" width="w-[76px]" disabled />
          <ToolButton icon={<UndoTool />} label="실행 취소" width="w-14" disabled />
          <ToolButton icon={<RedoTool />} label="다시 실행" width="w-[74px]" disabled />
          <span className="h-10 w-px bg-[#6fb0ef]" />
          <ToolButton icon={<MigrateTool />} label="OS 이식" width="w-[92px]" />
          <ToolButton icon={<CloneTool />} label="디스크 복제" width="w-[70px]" />
          <ToolButton icon={<WipeTool />} label="디스크 삭제" width="w-[92px]" />
          <ToolButton icon={<ConvertTool />} label="디스크 변환" width="w-[90px]" />
          <span className="ml-1.5 h-10 w-px bg-[#6fb0ef]" />
          <ToolButton icon={<BackupTool />} label="무료 백업" width="w-[92px]" />
          <span className="flex-1" />
          <ToolButton icon={<WrenchTool />} label="도구" width="w-10" />
        </div>
      </header>
      <div className="flex min-h-0 flex-1">
        <aside className="flex w-[238px] shrink-0 flex-col gap-2.5 border-r border-[#d4dce8] bg-[#eaf2fe] pt-[11px] pr-2 pl-[11px]">
          <SideCard title="마법사" items={wizardItems} />
          <SideCard title="디스크 작업" items={diskItems} />
        </aside>
        <div className="flex min-w-0 flex-1 flex-col">
          <div className="flex h-[296px] shrink-0">
            <div className="flex min-w-0 flex-1 flex-col overflow-hidden pl-[5px]">
              <div className="flex items-start gap-1.5 pr-[5px]">
                <div className="h-[26px] flex-1 bg-[#ecf5ff]" />
                <button aria-label="보기 방식" className="mt-1 flex h-[22px] w-[21px] items-center justify-center border border-[#dfe8f5] bg-[#f2f8ff]">
                  <svg className="size-3.5 fill-none stroke-[#4d92ea]" viewBox="0 0 14 14">
                    <path d="M.5.5h5v5h-5zM.5 8.500h5v5h-5zM8 1.500h6M8 4.500h3M8 9.500h6M8 12.500h3" />
                  </svg>
                </button>
              </div>
              <div className="flex flex-col gap-[108px] pt-5 pl-[582px]">
                <VolumeCard size="2GB" />
                <VolumeCard size="5MB" />
              </div>
            </div>
            <ScrollBar width="w-4" thumb="h-[109px]" />
          </div>
          <div className="h-1.5 shrink-0 border-y border-[#d3dbe8] bg-[#e9eef6]" />
          <div className="flex min-h-0 flex-1 gap-3 pr-0.5 pl-4">
            <div className="flex min-w-0 flex-1 flex-col gap-2.5 pt-2.5">
              {disks.map((disk, i) => (
                <DiskRow key={i} disk={disk} />
              ))}
            </div>
            <div className="flex pt-0.5 pb-0.5">
              <ScrollBar width="w-3.5" thumb="flex-1" />
            </div>
          </div>
        </div>
      </div>
      <ShredDialog />
    </div>
  );
}

export default function App() {
  return (
    <div className="relative flex h-screen flex-col overflow-hidden bg-[#4b4a47] font-['Open_Sans','Noto_Sans_CJK_KR',sans-serif] text-black">
      <TitleBar />
      <div className="mx-1 mb-[3px] flex min-h-0 flex-1 flex-col overflow-hidden rounded-t-sm bg-white">
        <Explorer />
      </div>
      <PartitionAssistant />
    </div>
  );
}
